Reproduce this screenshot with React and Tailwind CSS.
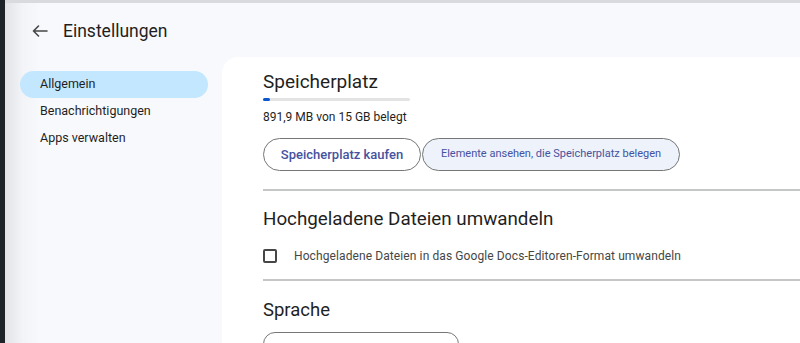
import React, { useState } from 'react';

const font = { fontFamily: 'Roboto, "Noto Sans", sans-serif' };

const navItems = ['Allgemein', 'Benachrichtigungen', 'Apps verwalten'];

const BackArrow = () => (
  <svg width="16" height="12" viewBox="0 0 16 12" fill="none" className="text-[#444746]">
    <path d="M15 6H1.5M6.5 1L1.5 6l5 5" stroke="currentColor" strokeWidth="1.6" strokeLinecap="round" strokeLinejoin="round" />
  </svg>
);

export default function App() {
  const [active, setActive] = useState('Allgemein');
  const [convert, setConvert] = useState(false);

  return (
    <div className="flex h-[343px] w-[800px] overflow-hidden bg-[#202124]" style={font}>
      {/* dark window edge */}
      <div className="w-[5px] shrink-0 bg-[#1e2329]" />

      <div className="flex flex-1 flex-col border-t-[3px] border-[#d9dadd] bg-[linear-gradient(to_right,#e2e3e6,#f3f4f8_18px,#f8f9fc_36px)]">
        {/* header */}
        <div className="flex h-[54px] shrink-0 items-center pl-[23px] pt-[2px]">
          <button className="flex h-6 w-6 items-center justify-center">
            <BackArrow />
          </button>
          <h1 className="ml-[11px] text-[17.5px] text-[#1f1f1f]">Einstellungen</h1>
        </div>

        <div className="flex flex-1">
          {/* sidebar */}
          <nav className="flex w-[217px] shrink-0 flex-col pl-[15px] pt-[14px]">
            {navItems.map((item) => (
              <button
                key={item}
                onClick={() => setActive(item)}
                className={`flex h-[27px] w-[188px] items-center rounded-full pl-5 text-left text-[12.5px] text-[#1f1f1f] ${
                  active === item ? 'bg-[#c2e7ff]' : ''
                }`}
              >
                {item}
              </button>
            ))}
          </nav>

          {/* content card */}
          <main className="flex-1 rounded-tl-2xl bg-white pl-[41px] pt-[11px]">
            <section>
              <h2 className="text-[19px] leading-7 text-[#1f1f1f]">Speicherplatz</h2>
              <div className="mt-[2px] h-[3px] w-[147px] rounded-full bg-[#e3e3e3]">
                <div className="h-[3px] w-[7px] rounded-full bg-[#0b57d0]" />
              </div>
              <p className="mt-[8px] text-[12px] leading-4 text-[#1f1f1f]">891,9 MB von 15 GB belegt</p>
              <div className="mt-[13px] flex gap-[1px]">
                <button className="h-[33px] w-[158px] rounded-full border border-[#747775] text-[13px] font-medium text-[#4552a0]">
                  Speicherplatz kaufen
                </button>
                <button className="h-[33px] w-[258px] rounded-full border border-[#747775] bg-[#eef2fa] text-[11px] text-[#4552a0]">
                  Elemente ansehen, die Speicherplatz belegen
                </button>
              </div>
            </section>

            <div className="mt-[18px] h-[2px] bg-[#c4c7c5]" />

            <section className="pt-[16px]">
              <h2 className="text-[18.8px] leading-6 text-[#1f1f1f]">Hochgeladene Dateien umwandeln</h2>
              <label className="mt-[15px] flex h-[20px] cursor-pointer items-center">
                <input
                  type="checkbox"
                  checked={convert}
                  onChange={(e) => setConvert(e.target.checked)}
                  className="h-[14px] w-[14px] appearance-none rounded-[2px] border-2 border-[#444746] bg-white"
                />
                <span className="ml-[17px] text-[12px] tracking-[0.1px] text-[#444746]">
                  Hochgeladene Dateien in das Google Docs-Editoren-Format umwandeln
                </span>
              </label>
            </section>

            <div className="mt-[13px] h-[2px] bg-[#c4c7c5]" />

            <section className="pt-[17px]">
              <h2 className="text-[18.5px] leading-6 text-[#1f1f1f]">Sprache</h2>
              <div className="mt-[10px] h-10 w-[196px] rounded-xl border border-[#747775]" />
            </section>
          </main>
        </div>
      </div>
    </div>
  );
}
